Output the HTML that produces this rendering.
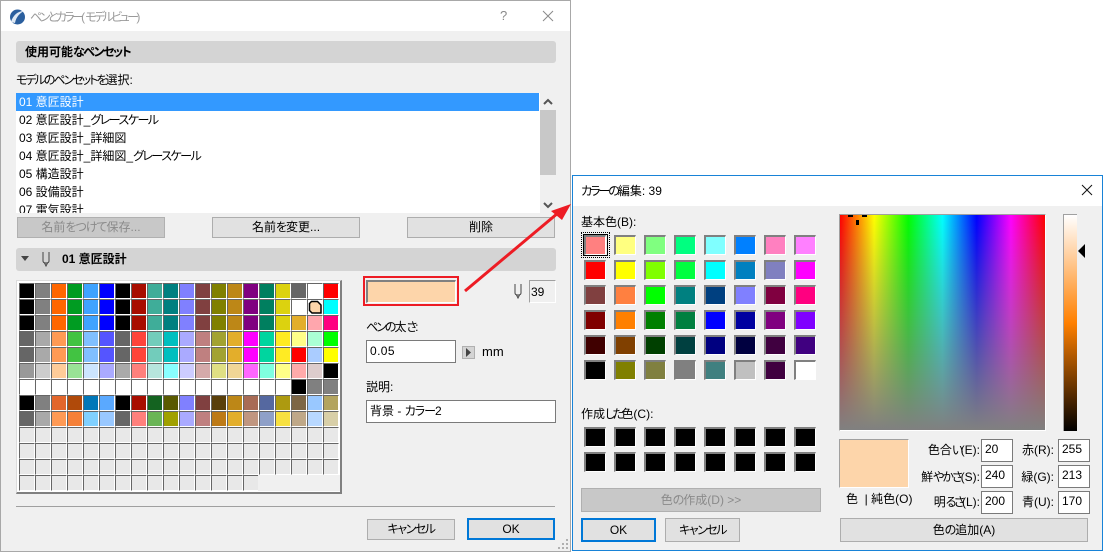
<!DOCTYPE html>
<html lang="ja">
<head>
<meta charset="utf-8">
<title>ペンとカラー</title>
<style>
html,body{margin:0;padding:0;width:1103px;height:552px;overflow:hidden;background:#fff}
body{position:relative;font:12px/16px "Liberation Sans","Noto Sans CJK JP",sans-serif;color:#000}
div,span,i{box-sizing:border-box}
.a{position:absolute}
.t{position:absolute;white-space:nowrap;line-height:16px;font-size:12px}
u{text-decoration:none;font-feature-settings:"palt";letter-spacing:-1px}
u.m{letter-spacing:-1.500px}
u.n{letter-spacing:-2px}
u.w{letter-spacing:-2.600px}
.bar{position:absolute;background:#d4d4d4;border-radius:3px}
.btn{position:absolute;background:#e1e1e1;border:1px solid #adadad;text-align:center;font-size:12px;white-space:nowrap}
.dis{background:#c8c8c8;border-color:#b0b0b0;color:#8a8a8a}
.def{border:2px solid #0078d7}
.inp{position:absolute;background:#fff;border:1px solid #7a7a7a;padding-left:3px;font-size:12px;white-space:nowrap}
#pal{position:absolute;left:19px;top:283px;width:320px;display:grid;grid-template-columns:repeat(20,16px);grid-auto-rows:16px}
#pal i{display:block;border-left:1px solid #666;border-top:1px solid #666;border-right:1px solid #fff;border-bottom:1px solid #fff}
.sw{position:absolute;display:grid;grid-template-columns:repeat(8,22px);column-gap:8px;row-gap:5px;grid-auto-rows:20px}
.sw i{display:block;border-left:2px solid #808080;border-top:2px solid #808080;border-right:1px solid #fff;border-bottom:1px solid #fff}
</style>
</head>
<body>

<!-- main window -->
<div class="a" style="left:0;top:0;width:571px;height:552px;background:#f0f0f0;border:1px solid #a8a8a8"></div>
<div class="a" style="left:1px;top:1px;width:569px;height:30px;background:#fff"></div>
<svg class="a" style="left:9px;top:8px" width="17" height="18" viewBox="0 0 17 18"><circle cx="8.500" cy="9" r="7.500" fill="#2b5f9e"/><path d="M2 14C4 7 9 3 15 3 11 5 7 9 6 15" fill="#dfe9f4"/></svg>
<span class="t" style="left:30px;top:9px;color:#9a9a9a"><u class="w">ペンとカラー</u>(<u class="w">モデルビュー</u>)</span>
<span class="t" style="left:500px;top:8px;color:#8a8a8a;font-size:13px">?</span>
<svg class="a" style="left:542px;top:10px" width="12" height="12"><path d="M1 1L11 11M11 1L1 11" stroke="#8a8a8a" fill="none"/></svg>

<div class="bar" style="left:16px;top:41px;width:540px;height:22px"></div>
<span class="t" style="left:25px;top:44px;font-weight:bold">使用可能<u class="m">なペンセット</u></span>
<span class="t" style="left:16px;top:72px"><u class="n">モデルのペンセットを</u>選択:</span>

<div class="a" style="left:16px;top:93px;width:524px;height:120px;background:#fff;overflow:hidden">
<div class="a" style="left:0;top:0;width:523px;height:18px;background:#3399ff"></div>
<span class="t" style="left:3px;top:1px;color:#fff">01 意匠設計</span>
<span class="t" style="left:3px;top:19px">02 意匠設計_<u class="m">グレースケール</u></span>
<span class="t" style="left:3px;top:37px">03 意匠設計_詳細図</span>
<span class="t" style="left:3px;top:55px">04 意匠設計_詳細図_<u class="m">グレースケール</u></span>
<span class="t" style="left:3px;top:73px">05 構造設計</span>
<span class="t" style="left:3px;top:91px">06 設備設計</span>
<span class="t" style="left:3px;top:109px">07 電気設計</span>
</div>
<div class="a" style="left:540px;top:110px;width:16px;height:65px;background:#c8c8c8"></div>
<svg class="a" style="left:543px;top:98px" width="10" height="8"><path d="M1 6L5 2 9 6" stroke="#555" stroke-width="2" fill="none"/></svg>
<svg class="a" style="left:543px;top:201px" width="10" height="8"><path d="M1 2L5 6 9 2" stroke="#555" stroke-width="2" fill="none"/></svg>

<div class="btn dis" style="left:17px;top:217px;width:148px;height:21px;line-height:19px">名前<u>をつけて</u>保存...</div>
<div class="btn" style="left:212px;top:217px;width:148px;height:21px;line-height:19px">名前<u>を</u>変更...</div>
<div class="btn" style="left:407px;top:217px;width:148px;height:21px;line-height:19px">削除</div>

<div class="bar" style="left:16px;top:248px;width:540px;height:23px"></div>
<svg class="a" style="left:21px;top:256px" width="9" height="6"><path d="M0 0H8L4 5Z" fill="#444"/></svg>
<svg class="a" style="left:41px;top:251px" width="10" height="16"><path d="M2 1V10Q2 12 5 12T8 10V1M3.500 12L5 15 6.500 12" stroke="#444" fill="none"/></svg>
<span class="t" style="left:62px;top:251px;font-weight:bold">01 意匠設計</span>

<!-- palette -->
<div class="a" style="left:16px;top:280px;width:326px;height:214px;background:#fff;border-left:1px solid #dcdcdc;border-top:1px solid #dcdcdc;border-right:2px solid #808080;border-bottom:2px solid #808080"></div>
<div id="pal">
<i style="background:#000"></i><i style="background:#808080"></i><i style="background:#f60"></i><i style="background:#009c22"></i><i style="background:#3fa3ff"></i><i style="background:#00f"></i><i style="background:#000"></i><i style="background:#a80d00"></i><i style="background:#3fad99"></i><i style="background:#008080"></i><i style="background:#8080ff"></i><i style="background:#804040"></i><i style="background:#808000"></i><i style="background:#bd8717"></i><i style="background:#800080"></i><i style="background:#007f5f"></i><i style="background:#dcd20f"></i><i style="background:#666"></i><i style="background:#fff"></i><i style="background:#f00"></i>
<i style="background:#000"></i><i style="background:#808080"></i><i style="background:#f60"></i><i style="background:#009c22"></i><i style="background:#3fa3ff"></i><i style="background:#00f"></i><i style="background:#000"></i><i style="background:#a80d00"></i><i style="background:#3fad99"></i><i style="background:#008080"></i><i style="background:#8080ff"></i><i style="background:#804040"></i><i style="background:#808000"></i><i style="background:#bd8717"></i><i style="background:#800080"></i><i style="background:#007f5f"></i><i style="background:#dcd20f"></i><i style="background:#fff"></i><i style="background:#fff"></i><i style="background:#0ff"></i>
<i style="background:#000"></i><i style="background:#808080"></i><i style="background:#f60"></i><i style="background:#009c22"></i><i style="background:#3fa3ff"></i><i style="background:#00f"></i><i style="background:#000"></i><i style="background:#a80d00"></i><i style="background:#3fad99"></i><i style="background:#008080"></i><i style="background:#8080ff"></i><i style="background:#804040"></i><i style="background:#808000"></i><i style="background:#bd8717"></i><i style="background:#800080"></i><i style="background:#007f5f"></i><i style="background:#dcd20f"></i><i style="background:#e3ae2b"></i><i style="background:#ffa6ad"></i><i style="background:#ff0080"></i>
<i style="background:#666"></i><i style="background:#a9a9a9"></i><i style="background:#ff9a55"></i><i style="background:#42c342"></i><i style="background:#80bfff"></i><i style="background:#55f"></i><i style="background:#666"></i><i style="background:#ff4439"></i><i style="background:#72ccbb"></i><i style="background:#00bfbf"></i><i style="background:#aaf"></i><i style="background:#bf8080"></i><i style="background:#a2a232"></i><i style="background:#e3ae2b"></i><i style="background:#f0f"></i><i style="background:#00d59f"></i><i style="background:#ffeb23"></i><i style="background:#ff8"></i><i style="background:#aaffd4"></i><i style="background:#0f0"></i>
<i style="background:#666"></i><i style="background:#a9a9a9"></i><i style="background:#ff9a55"></i><i style="background:#42c342"></i><i style="background:#80bfff"></i><i style="background:#55f"></i><i style="background:#666"></i><i style="background:#ff4439"></i><i style="background:#72ccbb"></i><i style="background:#00bfbf"></i><i style="background:#aaf"></i><i style="background:#bf8080"></i><i style="background:#a2a232"></i><i style="background:#e3ae2b"></i><i style="background:#f0f"></i><i style="background:#00d59f"></i><i style="background:#ffeb23"></i><i style="background:#f00"></i><i style="background:#acf"></i><i style="background:#ff0"></i>
<i style="background:#999"></i><i style="background:#ccc"></i><i style="background:#fc9"></i><i style="background:#99e396"></i><i style="background:#cce5ff"></i><i style="background:#aaf"></i><i style="background:#aaa"></i><i style="background:#ff807c"></i><i style="background:#b7e5dd"></i><i style="background:#8ff"></i><i style="background:#ccf"></i><i style="background:#d4aaaa"></i><i style="background:#dfdf84"></i><i style="background:#f1d696"></i><i style="background:#f6f"></i><i style="background:#80ffdf"></i><i style="background:#ff8"></i><i style="background:#faa"></i><i style="background:#dcc"></i><i style="background:#000"></i>
<i style="background:#fff"></i><i style="background:#fff"></i><i style="background:#fff"></i><i style="background:#fff"></i><i style="background:#fff"></i><i style="background:#fff"></i><i style="background:#fff"></i><i style="background:#fff"></i><i style="background:#fff"></i><i style="background:#fff"></i><i style="background:#fff"></i><i style="background:#fff"></i><i style="background:#fff"></i><i style="background:#fff"></i><i style="background:#fff"></i><i style="background:#fff"></i><i style="background:#fff"></i><i style="background:#000"></i><i style="background:#808080"></i><i style="background:#808080"></i>
<i style="background:#000"></i><i style="background:#808080"></i><i style="background:#e3662b"></i><i style="background:#b04a0a"></i><i style="background:#0077b8"></i><i style="background:#5aa9ff"></i><i style="background:#000"></i><i style="background:#a80d00"></i><i style="background:#146320"></i><i style="background:#5a5a00"></i><i style="background:#8080ff"></i><i style="background:#804040"></i><i style="background:#5a3f0a"></i><i style="background:#bd8717"></i><i style="background:#a86b55"></i><i style="background:#5568a0"></i><i style="background:#ad9a10"></i><i style="background:#7d6645"></i><i style="background:#99c8ff"></i><i style="background:#b3a45f"></i>
<i style="background:#666"></i><i style="background:#a9a9a9"></i><i style="background:#ff9a55"></i><i style="background:#f58038"></i><i style="background:#80d0ff"></i><i style="background:#99c8ff"></i><i style="background:#666"></i><i style="background:#ff807c"></i><i style="background:#6ab556"></i><i style="background:#a0a000"></i><i style="background:#aaf"></i><i style="background:#bf8080"></i><i style="background:#bd7a17"></i><i style="background:#e3ae2b"></i><i style="background:#c09680"></i><i style="background:#8fa0c8"></i><i style="background:#f7e040"></i><i style="background:#bfa888"></i><i style="background:#b8d8ff"></i><i style="background:#d8cfa8"></i>
<i style="background:#e8e8e8"></i><i style="background:#e8e8e8"></i><i style="background:#e8e8e8"></i><i style="background:#e8e8e8"></i><i style="background:#e8e8e8"></i><i style="background:#e8e8e8"></i><i style="background:#e8e8e8"></i><i style="background:#e8e8e8"></i><i style="background:#e8e8e8"></i><i style="background:#e8e8e8"></i><i style="background:#e8e8e8"></i><i style="background:#e8e8e8"></i><i style="background:#e8e8e8"></i><i style="background:#e8e8e8"></i><i style="background:#e8e8e8"></i><i style="background:#e8e8e8"></i><i style="background:#e8e8e8"></i><i style="background:#e8e8e8"></i><i style="background:#e8e8e8"></i><i style="background:#e8e8e8"></i>
<i style="background:#e8e8e8"></i><i style="background:#e8e8e8"></i><i style="background:#e8e8e8"></i><i style="background:#e8e8e8"></i><i style="background:#e8e8e8"></i><i style="background:#e8e8e8"></i><i style="background:#e8e8e8"></i><i style="background:#e8e8e8"></i><i style="background:#e8e8e8"></i><i style="background:#e8e8e8"></i><i style="background:#e8e8e8"></i><i style="background:#e8e8e8"></i><i style="background:#e8e8e8"></i><i style="background:#e8e8e8"></i><i style="background:#e8e8e8"></i><i style="background:#e8e8e8"></i><i style="background:#e8e8e8"></i><i style="background:#e8e8e8"></i><i style="background:#e8e8e8"></i><i style="background:#e8e8e8"></i>
<i style="background:#e8e8e8"></i><i style="background:#e8e8e8"></i><i style="background:#e8e8e8"></i><i style="background:#e8e8e8"></i><i style="background:#e8e8e8"></i><i style="background:#e8e8e8"></i><i style="background:#e8e8e8"></i><i style="background:#e8e8e8"></i><i style="background:#e8e8e8"></i><i style="background:#e8e8e8"></i><i style="background:#e8e8e8"></i><i style="background:#e8e8e8"></i><i style="background:#e8e8e8"></i><i style="background:#e8e8e8"></i><i style="background:#e8e8e8"></i><i style="background:#e8e8e8"></i><i style="background:#e8e8e8"></i><i style="background:#e8e8e8"></i><i style="background:#e8e8e8"></i><i style="background:#e8e8e8"></i>
<i style="background:#e8e8e8"></i><i style="background:#e8e8e8"></i><i style="background:#e8e8e8"></i><i style="background:#e8e8e8"></i><i style="background:#e8e8e8"></i><i style="background:#e8e8e8"></i><i style="background:#e8e8e8"></i><i style="background:#e8e8e8"></i><i style="background:#e8e8e8"></i><i style="background:#e8e8e8"></i><i style="background:#e8e8e8"></i><i style="background:#e8e8e8"></i><i style="background:#e8e8e8"></i><i style="background:#e8e8e8"></i><i style="background:#e8e8e8"></i>
</div>
<div class="a" style="left:258px;top:475px;width:82px;height:16px;background:#f0f0f0"></div>
<svg class="a" style="left:308px;top:300px" width="15" height="15"><path d="M1.500 3.500L3.500 1.500H9.500L13 5V13H4L1.500 10.500Z" fill="#fdd5aa" stroke="#000" stroke-width="1.500"/></svg>

<!-- right column of pen panel -->
<div class="a" style="left:363px;top:276px;width:96px;height:30px;border:2px solid #ed1c24"></div>
<div class="a" style="left:366px;top:280px;width:90px;height:23px;background:#fdd5aa;border-left:2px solid #808080;border-top:2px solid #808080;border-right:1px solid #fff;border-bottom:1px solid #fff"></div>
<svg class="a" style="left:513px;top:283px" width="10" height="16"><path d="M2 1V10Q2 12 5 12T8 10V1M3.500 12L5 15 6.500 12" stroke="#444" fill="none"/></svg>
<div class="a" style="left:529px;top:280px;width:27px;height:23px;border-left:1px solid #a0a0a0;border-top:1px solid #a0a0a0;border-right:1px solid #fff;border-bottom:1px solid #fff"></div>
<span class="t" style="left:531px;top:284px">39</span>
<span class="t" style="left:366px;top:319px"><u class="n">ペンの</u>太<u class="n">さ</u>:</span>
<div class="inp" style="left:366px;top:340px;width:90px;height:23px;line-height:21px;letter-spacing:.4px">0.05</div>
<div class="a" style="left:462px;top:346px;width:13px;height:13px;background:#d4d4d4;border:1px solid #b0b0b0"></div>
<svg class="a" style="left:465px;top:348px" width="7" height="9"><path d="M1 0L6 4.500 1 9Z" fill="#444"/></svg>
<span class="t" style="left:482px;top:344px;font-size:13px">mm</span>
<span class="t" style="left:366px;top:379px">説明:</span>
<div class="inp" style="left:366px;top:400px;width:190px;height:23px;line-height:21px">背景 - <u>カラー</u>2</div>
<div class="a" style="left:16px;top:506px;width:539px;height:1px;background:#a0a0a0"></div>
<div class="btn" style="left:367px;top:519px;width:88px;height:21px;line-height:19px"><u class="m">キャンセル</u></div>
<div class="btn def" style="left:467px;top:518px;width:88px;height:22px;line-height:18px">OK</div>
<svg class="a" style="left:558px;top:539px" width="11" height="11" fill="#b0b0b0"><rect x="8" y="0" width="2" height="2"/><rect x="4" y="4" width="2" height="2"/><rect x="8" y="4" width="2" height="2"/><rect x="0" y="8" width="2" height="2"/><rect x="4" y="8" width="2" height="2"/><rect x="8" y="8" width="2" height="2"/></svg>

<!-- color dialog -->
<div class="a" style="left:572px;top:175px;width:531px;height:376px;background:#f0f0f0;border:1px solid #1883d7"></div>
<div class="a" style="left:573px;top:176px;width:529px;height:30px;background:#fff"></div>
<span class="t" style="left:581px;top:183px"><u class="n">カラーの</u>編集: 39</span>
<svg class="a" style="left:1081px;top:184px" width="12" height="12"><path d="M1 1L11 11M11 1L1 11" stroke="#111" fill="none"/></svg>
<span class="t" style="left:581px;top:214px">基本色(B):</span>
<div class="sw" style="left:584px;top:235px">
<i style="background:#ff8080"></i><i style="background:#ffff80"></i><i style="background:#80ff80"></i><i style="background:#00ff80"></i><i style="background:#80ffff"></i><i style="background:#0080ff"></i><i style="background:#ff80c0"></i><i style="background:#ff80ff"></i>
<i style="background:#f00"></i><i style="background:#ff0"></i><i style="background:#80ff00"></i><i style="background:#00ff40"></i><i style="background:#0ff"></i><i style="background:#0080c0"></i><i style="background:#8080c0"></i><i style="background:#f0f"></i>
<i style="background:#804040"></i><i style="background:#ff8040"></i><i style="background:#0f0"></i><i style="background:#008080"></i><i style="background:#004080"></i><i style="background:#8080ff"></i><i style="background:#800040"></i><i style="background:#ff0080"></i>
<i style="background:#800000"></i><i style="background:#ff8000"></i><i style="background:#008000"></i><i style="background:#008040"></i><i style="background:#00f"></i><i style="background:#0000a0"></i><i style="background:#800080"></i><i style="background:#8000ff"></i>
<i style="background:#400000"></i><i style="background:#804000"></i><i style="background:#004000"></i><i style="background:#004040"></i><i style="background:#000080"></i><i style="background:#000040"></i><i style="background:#400040"></i><i style="background:#400080"></i>
<i style="background:#000"></i><i style="background:#808000"></i><i style="background:#808040"></i><i style="background:#808080"></i><i style="background:#408080"></i><i style="background:#c0c0c0"></i><i style="background:#400040"></i><i style="background:#fff"></i>
</div>
<div class="a" style="left:581px;top:232px;width:29px;height:26px;border:1px dotted #000"></div>
<div class="a" style="left:583px;top:234px;width:25px;height:22px;border:1px solid #000"></div>
<span class="t" style="left:581px;top:406px">作成<u class="w">した</u>色(C):</span>
<div class="sw" style="left:584px;top:427px">
<i style="background:#000"></i><i style="background:#000"></i><i style="background:#000"></i><i style="background:#000"></i><i style="background:#000"></i><i style="background:#000"></i><i style="background:#000"></i><i style="background:#000"></i>
<i style="background:#000"></i><i style="background:#000"></i><i style="background:#000"></i><i style="background:#000"></i><i style="background:#000"></i><i style="background:#000"></i><i style="background:#000"></i><i style="background:#000"></i>
</div>
<div class="btn dis" style="left:581px;top:488px;width:240px;height:24px;line-height:22px">色<u>の</u>作成(D) &gt;&gt;</div>
<div class="btn def" style="left:581px;top:518px;width:75px;height:24px;line-height:20px">OK</div>
<div class="btn" style="left:665px;top:518px;width:75px;height:24px;line-height:22px"><u class="m">キャンセル</u></div>

<!-- spectrum -->
<div class="a" style="left:839px;top:214px;width:207px;height:217px;border-left:1px solid #a0a0a0;border-top:1px solid #a0a0a0;border-right:1px solid #fff;border-bottom:1px solid #fff;background:linear-gradient(to bottom,rgba(128,128,128,0),#808080),linear-gradient(to right,#f00 0%,#ff0 16.67%,#0f0 33.33%,#0ff 50%,#00f 66.67%,#f0f 83.33%,#f00 100%)"></div>
<div class="a" style="left:848px;top:215px;width:5px;height:2px;background:#000"></div>
<div class="a" style="left:862px;top:215px;width:5px;height:2px;background:#000"></div>
<div class="a" style="left:856px;top:220px;width:3px;height:5px;background:#000"></div>
<div class="a" style="left:1063px;top:214px;width:14px;height:217px;border-left:1px solid #a0a0a0;border-top:1px solid #a0a0a0;background:linear-gradient(to bottom,#fff 0%,#ff8000 50%,#000 100%)"></div>
<svg class="a" style="left:1078px;top:244px" width="8" height="14"><path d="M0 7L7 0V14Z" fill="#000"/></svg>

<!-- preview + fields -->
<div class="a" style="left:839px;top:439px;width:70px;height:49px;background:#fdd5aa;border-left:1px solid #a0a0a0;border-top:1px solid #a0a0a0;border-right:1px solid #fff;border-bottom:1px solid #fff"></div>
<span class="t" style="left:846px;top:491px">色 &nbsp;| 純色(O)</span>
<span class="t" style="right:123px;top:442px">色合<u class="w">い</u>(E):</span>
<span class="t" style="right:123px;top:469px">鮮<u class="n">やかさ</u>(S):</span>
<span class="t" style="right:123px;top:494px">明<u class="w">るさ</u>(L):</span>
<span class="t" style="right:49px;top:442px">赤(R):</span>
<span class="t" style="right:49px;top:469px">緑(G):</span>
<span class="t" style="right:49px;top:494px">青(U):</span>
<div class="inp" style="left:981px;top:439px;width:32px;height:23px;line-height:19px">20</div>
<div class="inp" style="left:981px;top:465px;width:32px;height:23px;line-height:19px">240</div>
<div class="inp" style="left:981px;top:491px;width:32px;height:23px;line-height:19px">200</div>
<div class="inp" style="left:1058px;top:439px;width:32px;height:23px;line-height:19px">255</div>
<div class="inp" style="left:1058px;top:465px;width:32px;height:23px;line-height:19px">213</div>
<div class="inp" style="left:1058px;top:491px;width:32px;height:23px;line-height:19px">170</div>
<div class="btn" style="left:840px;top:518px;width:248px;height:24px;line-height:22px">色<u>の</u>追加(A)</div>

<!-- red arrow -->
<svg class="a" style="left:0;top:0" width="1103" height="552"><path d="M465 291L558 213" stroke="#ed1c24" stroke-width="3" fill="none"/><path d="M571 204L551 211 562 220Z" fill="#ed1c24"/></svg>

</body>
</html>
